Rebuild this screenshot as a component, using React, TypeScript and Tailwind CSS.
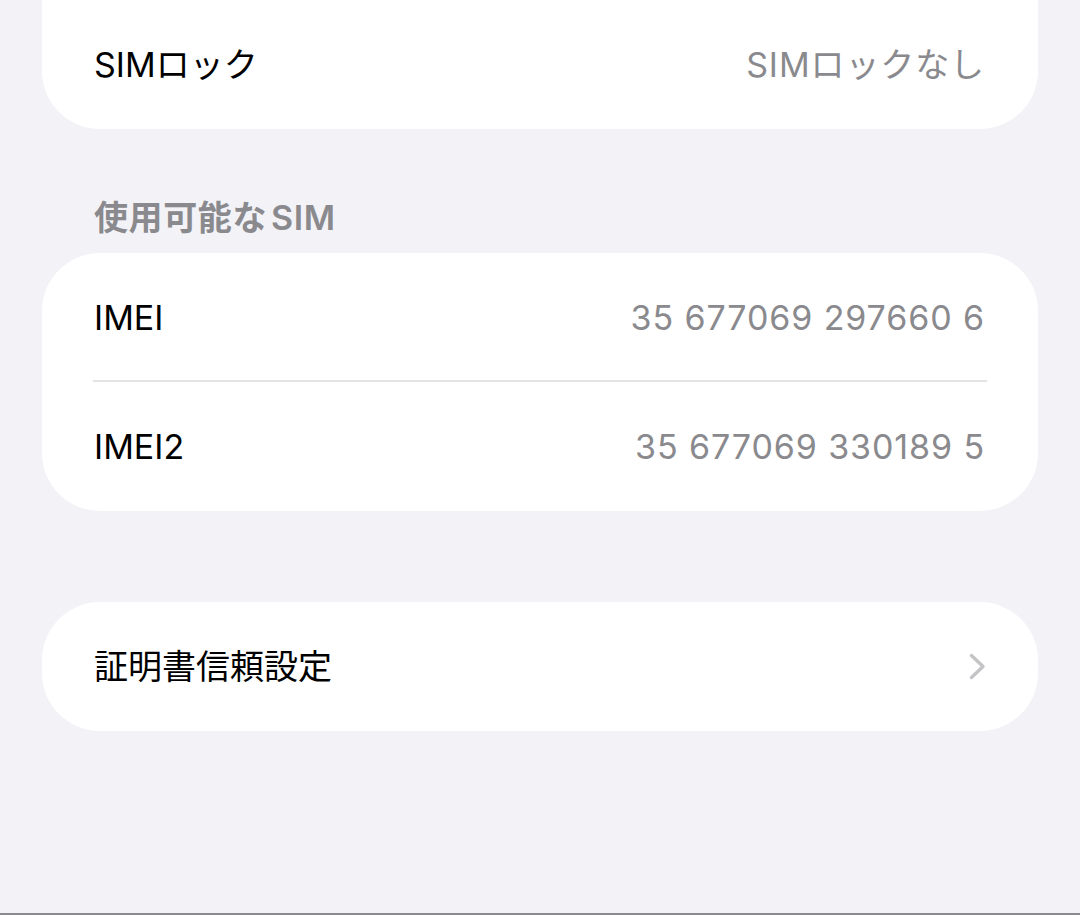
const font = { fontFamily: '"Inter", "Noto Sans CJK JP", sans-serif' };

type RowProps = {
  label: string;
  value?: string;
  chevron?: boolean;
  divider?: boolean;
};

const Row = ({ label, value, chevron, divider }: RowProps) => (
  <div className="relative flex h-[129px] items-center justify-between pl-[52px] pr-[53px]">
    <span className="text-[34px] leading-[40px] text-black">{label}</span>
    {value && <span className="text-[34px] leading-[40px] tracking-[0.9px] text-[#8a8a8e]">{value}</span>}
    {chevron && (
      <svg width="17" height="27" viewBox="0 0 17 27" fill="none" className="-mr-[1px]">
        <polyline
          points="2.5,2.5 14,13.5 2.5,24.5"
          stroke="#c4c4c7"
          strokeWidth="3.4"
          strokeLinecap="round"
          strokeLinejoin="round"
        />
      </svg>
    )}
    {divider && <div className="absolute bottom-0 left-[51px] right-[51px] h-[2px] bg-[#e3e3e6]" />}
  </div>
);

export default function App() {
  return (
    <div className="flex h-[915px] flex-col overflow-hidden bg-[#f2f2f7]" style={font}>
      <div className="mx-[42px] rounded-b-[58px] bg-white">
        <Row label="SIMロック" value="SIMロックなし" />
      </div>

      <div className="px-[94px] pb-[15px] pt-[69px] text-[34px] font-semibold leading-[40px] tracking-[0.6px] text-[#8a8a8e]">
        使用可能な<span className="ml-[4px]">SIM</span>
      </div>

      <div className="mx-[42px] rounded-[58px] bg-white">
        <Row label="IMEI" value="35 677069 297660 6" divider />
        <Row label="IMEI2" value="35 677069 330189 5" />
      </div>

      <div className="mx-[42px] mt-[91px] rounded-[58px] bg-white">
        <Row label="証明書信頼設定" chevron />
      </div>

      <div className="flex-1" />
      <div className="h-[2px] bg-[#8b8b8d]" />
    </div>
  );
}
